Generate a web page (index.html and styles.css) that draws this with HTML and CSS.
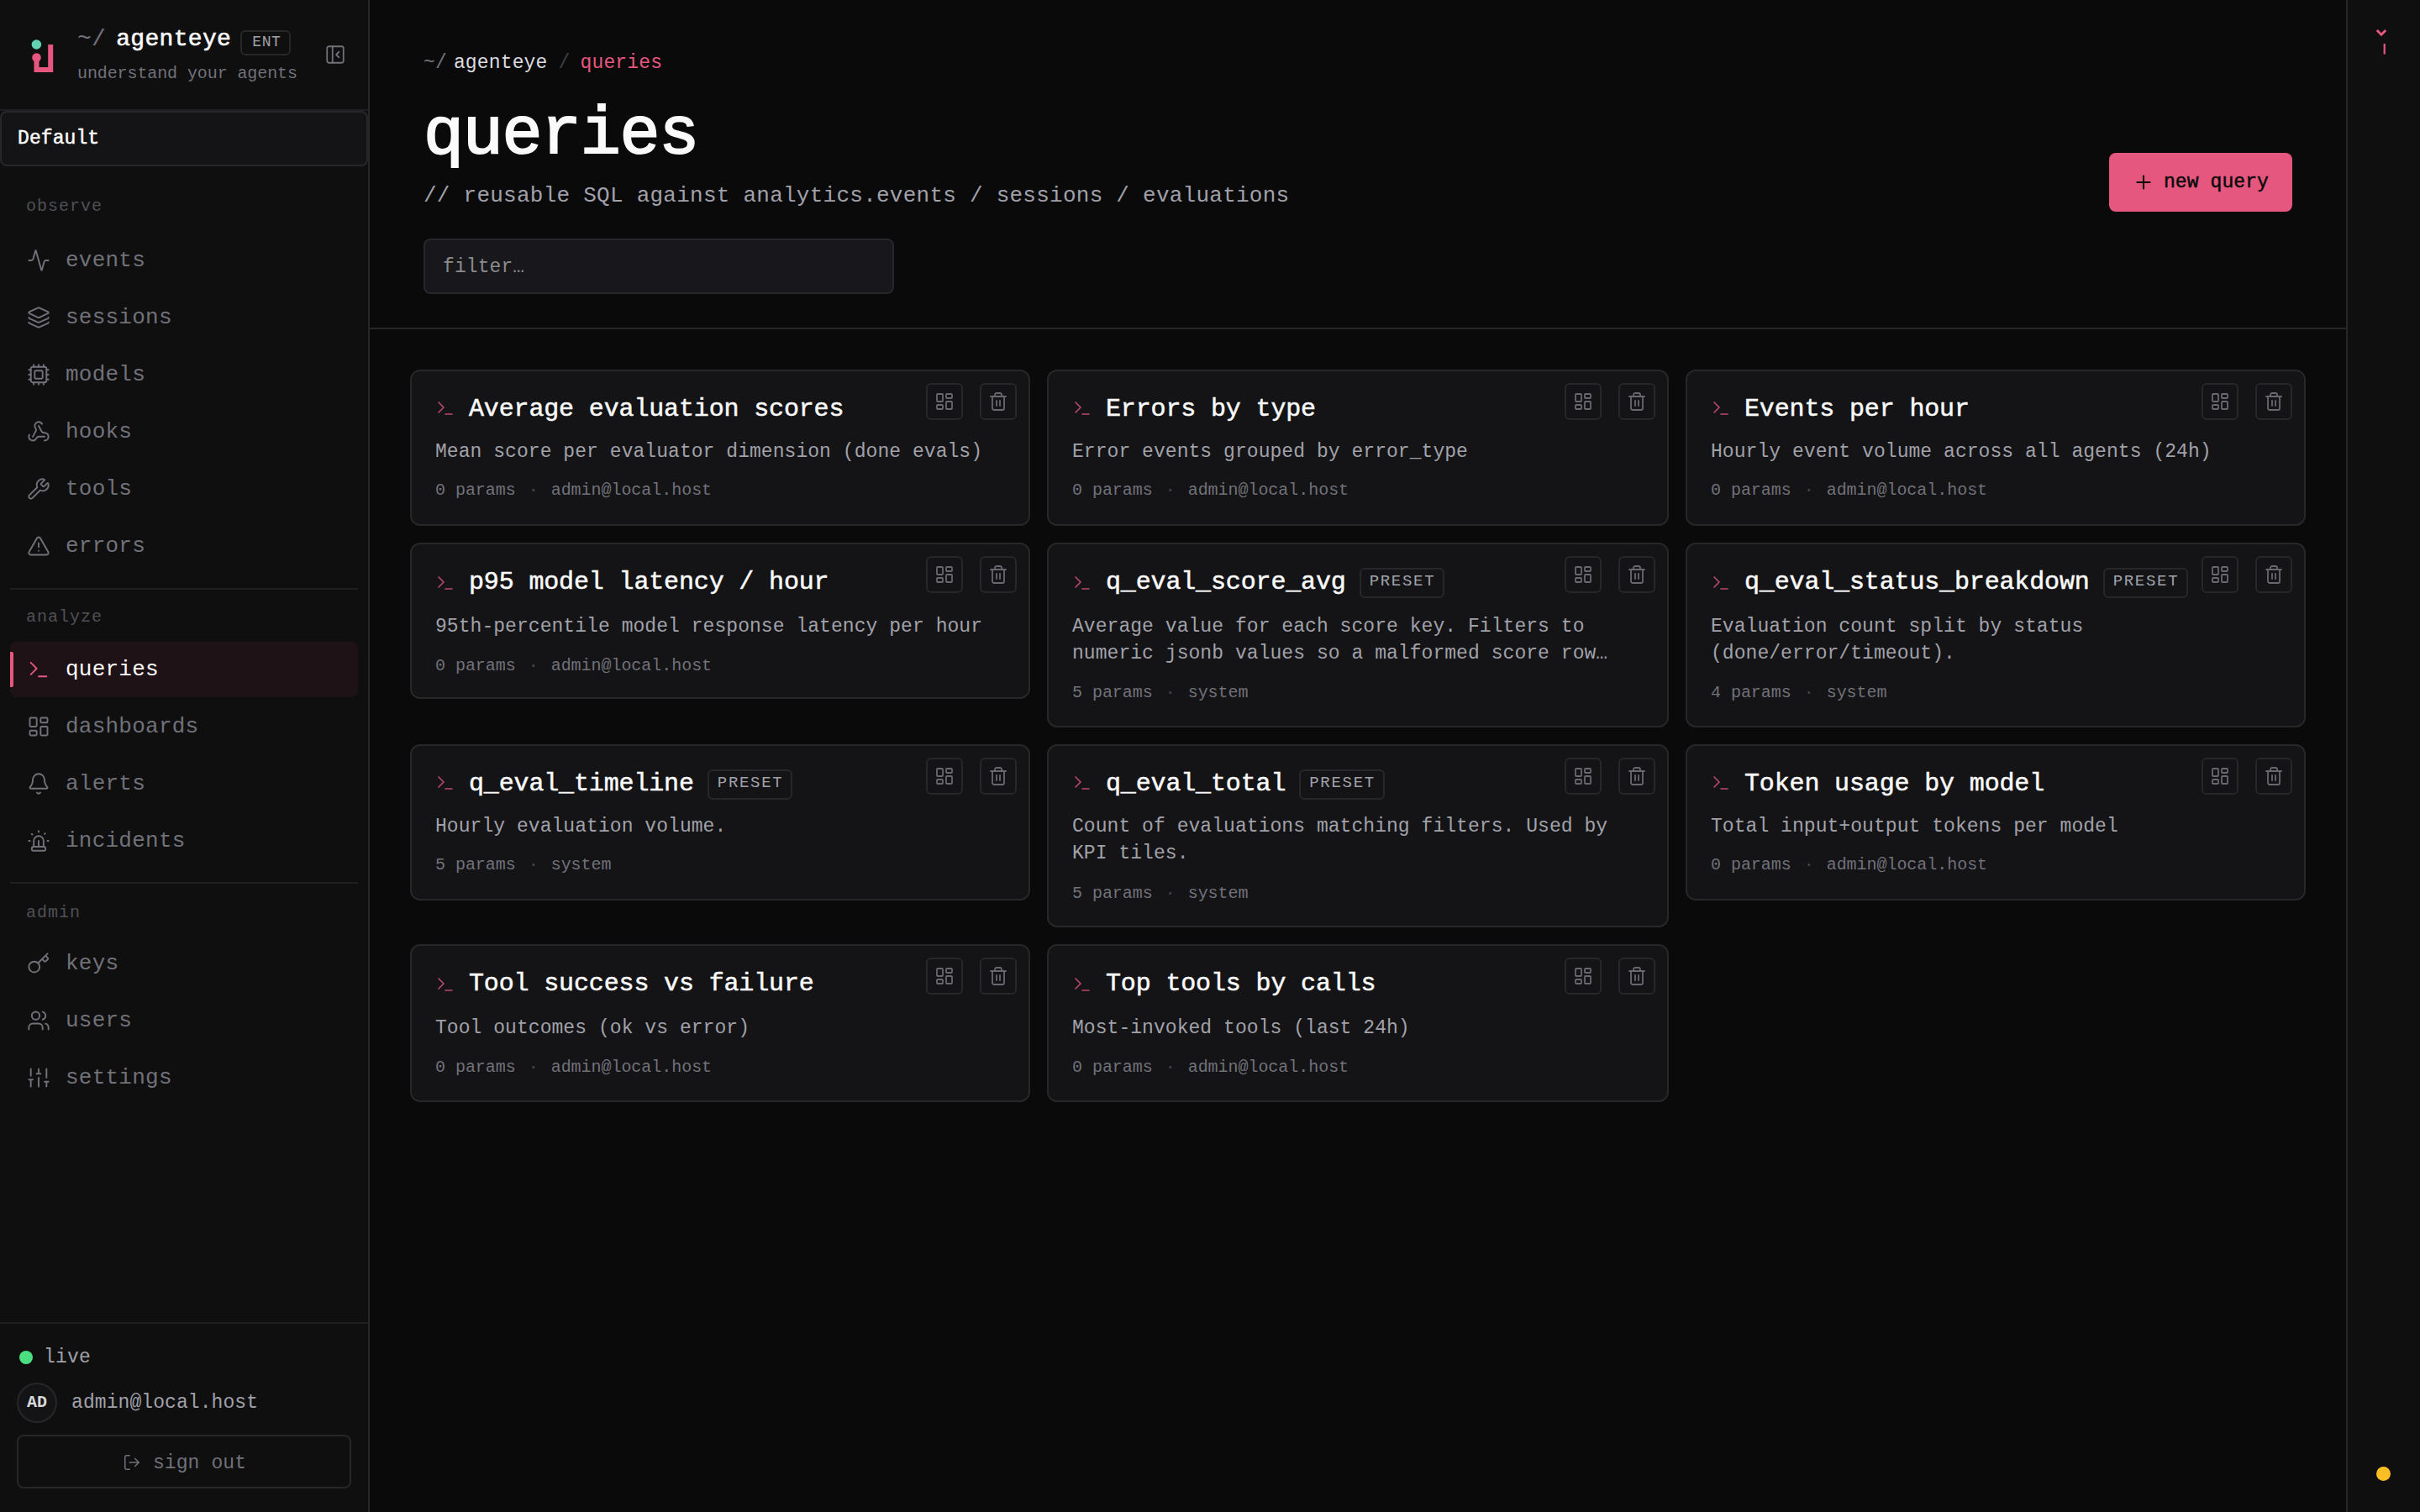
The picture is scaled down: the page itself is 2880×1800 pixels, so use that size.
FILE: index.html
```html
<!DOCTYPE html>
<html lang="en">
<head>
<meta charset="utf-8">
<title>agenteye / queries</title>
<link rel="stylesheet" href="styles.css">
</head>
<body>
<svg class="sprite" aria-hidden="true">
  <symbol id="activity" viewBox="0 0 24 24"><path d="M22 12h-2.48a2 2 0 0 0-1.93 1.46l-2.35 8.36a.25.25 0 0 1-.48 0L9.24 2.18a.25.25 0 0 0-.48 0l-2.35 8.36A2 2 0 0 1 4.49 12H2"/></symbol>
  <symbol id="layers" viewBox="0 0 24 24"><path d="M12.83 2.18a2 2 0 0 0-1.66 0L2.6 6.08a1 1 0 0 0 0 1.83l8.58 3.91a2 2 0 0 0 1.66 0l8.58-3.9a1 1 0 0 0 0-1.83z"/><path d="M2 12a1 1 0 0 0 .58.91l8.6 3.91a2 2 0 0 0 1.65 0l8.58-3.9A1 1 0 0 0 22 12"/><path d="M2 17a1 1 0 0 0 .58.91l8.6 3.91a2 2 0 0 0 1.65 0l8.58-3.9A1 1 0 0 0 22 17"/></symbol>
  <symbol id="cpu" viewBox="0 0 24 24"><path d="M12 20v2M12 2v2M17 20v2M17 2v2M2 12h2M2 17h2M2 7h2M20 12h2M20 17h2M20 7h2M7 20v2M7 2v2"/><rect x="4" y="4" width="16" height="16" rx="2"/><rect x="8" y="8" width="8" height="8" rx="1"/></symbol>
  <symbol id="webhook" viewBox="0 0 24 24"><path d="M18 16.98h-5.99c-1.1 0-1.95.94-2.48 1.9A4 4 0 0 1 2 17c.01-.7.2-1.4.57-2"/><path d="m6 17 3.13-5.78c.53-.97.1-2.18-.5-3.1a4 4 0 1 1 6.89-4.06"/><path d="m12 6 3.13 5.73C15.66 12.7 16.9 13 18 13a4 4 0 0 1 0 8"/></symbol>
  <symbol id="wrench" viewBox="0 0 24 24"><path d="M14.7 6.3a1 1 0 0 0 0 1.4l1.6 1.6a1 1 0 0 0 1.4 0l3.106-3.105c.32-.322.863-.22.983.218a6 6 0 0 1-8.259 7.057l-7.91 7.91a1 1 0 0 1-2.999-3l7.91-7.91a6 6 0 0 1 7.057-8.259c.438.12.54.662.219.984z"/></symbol>
  <symbol id="alert" viewBox="0 0 24 24"><path d="m21.73 18-8-14a2 2 0 0 0-3.48 0l-8 14A2 2 0 0 0 4 21h16a2 2 0 0 0 1.73-3"/><path d="M12 9v4M12 17h.01"/></symbol>
  <symbol id="terminal" viewBox="0 0 24 24"><path d="m4 17 6-6-6-6M12 19h8"/></symbol>
  <symbol id="dashboard" viewBox="0 0 24 24"><rect x="3" y="3" width="7" height="9" rx="1"/><rect x="14" y="3" width="7" height="5" rx="1"/><rect x="14" y="12" width="7" height="9" rx="1"/><rect x="3" y="16" width="7" height="5" rx="1"/></symbol>
  <symbol id="bell" viewBox="0 0 24 24"><path d="M10.268 21a2 2 0 0 0 3.464 0"/><path d="M3.262 15.326A1 1 0 0 0 4 17h16a1 1 0 0 0 .74-1.673C19.41 13.956 18 12.499 18 8A6 6 0 0 0 6 8c0 4.499-1.411 5.956-2.738 7.326"/></symbol>
  <symbol id="siren" viewBox="0 0 24 24"><path d="M7 18v-6a5 5 0 1 1 10 0v6"/><path d="M5 21a1 1 0 0 0 1 1h12a1 1 0 0 0 1-1v-1a2 2 0 0 0-2-2H7a2 2 0 0 0-2 2z"/><path d="M21 12h1M18.5 4.5 18 5M2 12h1M12 2v1M4.929 4.929l.707.707M12 12v6"/></symbol>
  <symbol id="key" viewBox="0 0 24 24"><path d="m15.5 7.5 2.3 2.3a1 1 0 0 0 1.4 0l2.1-2.1a1 1 0 0 0 0-1.4L19 4M21 2l-9.6 9.6"/><circle cx="7.5" cy="15.5" r="5.5"/></symbol>
  <symbol id="users" viewBox="0 0 24 24"><path d="M16 21v-2a4 4 0 0 0-4-4H6a4 4 0 0 0-4 4v2"/><circle cx="9" cy="7" r="4"/><path d="M22 21v-2a4 4 0 0 0-3-3.87M16 3.13a4 4 0 0 1 0 7.75"/></symbol>
  <symbol id="sliders" viewBox="0 0 24 24"><path d="M4 21v-7M4 10V3M12 21v-9M12 8V3M20 21v-5M20 12V3M2 14h4M10 8h4M18 16h4"/></symbol>
  <symbol id="logout" viewBox="0 0 24 24"><path d="M9 21H5a2 2 0 0 1-2-2V5a2 2 0 0 1 2-2h4M16 17l5-5-5-5M21 12H9"/></symbol>
  <symbol id="panel" viewBox="0 0 24 24"><rect x="3" y="3" width="18" height="18" rx="2"/><path d="M9 3v18M16 15l-3-3 3-3"/></symbol>
  <symbol id="plus" viewBox="0 0 24 24"><path d="M5 12h14M12 5v14"/></symbol>
  <symbol id="trash" viewBox="0 0 24 24"><path d="M3 6h18M19 6v14a2 2 0 0 1-2 2H7a2 2 0 0 1-2-2V6M8 6V4a2 2 0 0 1 2-2h4a2 2 0 0 1 2 2v2M10 11v6M14 11v6"/></symbol>
</svg>

<div class="app">
  <aside class="sidebar">
    <header class="brand">
      <svg class="logo" viewBox="0 0 28 36"><path class="logo-line" d="M6.5 14V33H23.2V3"/><circle class="logo-node" cx="6.5" cy="18.6" r="5.3"/><circle class="logo-eye" cx="6.4" cy="3" r="5.8"/></svg>
      <div class="brand-text">
        <div class="brand-row"><span class="tilde">~/</span><span class="brand-name">agenteye</span><span class="ent">ENT</span></div>
        <div class="tagline">understand your agents</div>
      </div>
      <svg class="icon collapse"><use href="#panel"/></svg>
    </header>
    <div class="workspace">Default</div>
    <nav class="nav">
      <section class="group">
        <h2 class="label">observe</h2>
        <a class="item"><svg class="icon"><use href="#activity"/></svg>events</a>
        <a class="item"><svg class="icon"><use href="#layers"/></svg>sessions</a>
        <a class="item"><svg class="icon"><use href="#cpu"/></svg>models</a>
        <a class="item"><svg class="icon"><use href="#webhook"/></svg>hooks</a>
        <a class="item"><svg class="icon"><use href="#wrench"/></svg>tools</a>
        <a class="item"><svg class="icon"><use href="#alert"/></svg>errors</a>
      </section>
      <section class="group">
        <h2 class="label">analyze</h2>
        <a class="item active"><svg class="icon"><use href="#terminal"/></svg>queries</a>
        <a class="item"><svg class="icon"><use href="#dashboard"/></svg>dashboards</a>
        <a class="item"><svg class="icon"><use href="#bell"/></svg>alerts</a>
        <a class="item"><svg class="icon"><use href="#siren"/></svg>incidents</a>
      </section>
      <section class="group">
        <h2 class="label">admin</h2>
        <a class="item"><svg class="icon"><use href="#key"/></svg>keys</a>
        <a class="item"><svg class="icon"><use href="#users"/></svg>users</a>
        <a class="item"><svg class="icon"><use href="#sliders"/></svg>settings</a>
      </section>
    </nav>
    <footer class="account">
      <div class="live"><span class="live-dot"></span>live</div>
      <div class="user"><span class="avatar">AD</span>admin@local.host</div>
      <button class="signout"><svg class="icon"><use href="#logout"/></svg>sign out</button>
    </footer>
  </aside>

  <main class="main">
    <header class="page-head">
      <div class="page-title">
        <div class="crumbs"><span class="tilde">~/</span><span class="crumb-root">agenteye</span><span class="crumb-sep">/</span><span class="crumb-here">queries</span></div>
        <h1>queries</h1>
        <p class="lead">// reusable SQL against analytics.events / sessions / evaluations</p>
        <input class="filter" type="text" placeholder="filter…">
      </div>
      <button class="new-query"><svg class="icon"><use href="#plus"/></svg>new query</button>
    </header>

    <div class="grid">
      <article class="card raised">
        <h3 class="title"><svg class="icon"><use href="#terminal"/></svg>Average evaluation scores</h3>
        <p class="desc">Mean score per evaluator dimension (done evals)</p>
        <p class="meta"><span>0 params</span><span class="dot">·</span><span>admin@local.host</span></p>
        <div class="actions"><button class="act"><svg class="icon"><use href="#dashboard"/></svg></button><button class="act"><svg class="icon"><use href="#trash"/></svg></button></div>
      </article>
      <article class="card raised">
        <h3 class="title"><svg class="icon"><use href="#terminal"/></svg>Errors by type</h3>
        <p class="desc">Error events grouped by error_type</p>
        <p class="meta"><span>0 params</span><span class="dot">·</span><span>admin@local.host</span></p>
        <div class="actions"><button class="act"><svg class="icon"><use href="#dashboard"/></svg></button><button class="act"><svg class="icon"><use href="#trash"/></svg></button></div>
      </article>
      <article class="card raised">
        <h3 class="title"><svg class="icon"><use href="#terminal"/></svg>Events per hour</h3>
        <p class="desc">Hourly event volume across all agents (24h)</p>
        <p class="meta"><span>0 params</span><span class="dot">·</span><span>admin@local.host</span></p>
        <div class="actions"><button class="act"><svg class="icon"><use href="#dashboard"/></svg></button><button class="act"><svg class="icon"><use href="#trash"/></svg></button></div>
      </article>

      <article class="card">
        <h3 class="title"><svg class="icon"><use href="#terminal"/></svg>p95 model latency / hour</h3>
        <p class="desc">95th-percentile model response latency per hour</p>
        <p class="meta"><span>0 params</span><span class="dot">·</span><span>admin@local.host</span></p>
        <div class="actions"><button class="act"><svg class="icon"><use href="#dashboard"/></svg></button><button class="act"><svg class="icon"><use href="#trash"/></svg></button></div>
      </article>
      <article class="card tall">
        <h3 class="title"><svg class="icon"><use href="#terminal"/></svg>q_eval_score_avg<span class="preset">PRESET</span></h3>
        <p class="desc">Average value for each score key. Filters to numeric jsonb values so a malformed score row…</p>
        <p class="meta"><span>5 params</span><span class="dot">·</span><span>system</span></p>
        <div class="actions"><button class="act"><svg class="icon"><use href="#dashboard"/></svg></button><button class="act"><svg class="icon"><use href="#trash"/></svg></button></div>
      </article>
      <article class="card tall">
        <h3 class="title"><svg class="icon"><use href="#terminal"/></svg>q_eval_status_breakdown<span class="preset">PRESET</span></h3>
        <p class="desc">Evaluation count split by status <span class="keep">(done/error/timeout).</span></p>
        <p class="meta"><span>4 params</span><span class="dot">·</span><span>system</span></p>
        <div class="actions"><button class="act"><svg class="icon"><use href="#dashboard"/></svg></button><button class="act"><svg class="icon"><use href="#trash"/></svg></button></div>
      </article>

      <article class="card raised">
        <h3 class="title"><svg class="icon"><use href="#terminal"/></svg>q_eval_timeline<span class="preset">PRESET</span></h3>
        <p class="desc">Hourly evaluation volume.</p>
        <p class="meta"><span>5 params</span><span class="dot">·</span><span>system</span></p>
        <div class="actions"><button class="act"><svg class="icon"><use href="#dashboard"/></svg></button><button class="act"><svg class="icon"><use href="#trash"/></svg></button></div>
      </article>
      <article class="card raised two-line">
        <h3 class="title"><svg class="icon"><use href="#terminal"/></svg>q_eval_total<span class="preset">PRESET</span></h3>
        <p class="desc">Count of evaluations matching filters. Used by KPI tiles.</p>
        <p class="meta"><span>5 params</span><span class="dot">·</span><span>system</span></p>
        <div class="actions"><button class="act"><svg class="icon"><use href="#dashboard"/></svg></button><button class="act"><svg class="icon"><use href="#trash"/></svg></button></div>
      </article>
      <article class="card raised">
        <h3 class="title"><svg class="icon"><use href="#terminal"/></svg>Token usage by model</h3>
        <p class="desc">Total input+output tokens per model</p>
        <p class="meta"><span>0 params</span><span class="dot">·</span><span>admin@local.host</span></p>
        <div class="actions"><button class="act"><svg class="icon"><use href="#dashboard"/></svg></button><button class="act"><svg class="icon"><use href="#trash"/></svg></button></div>
      </article>

      <article class="card last">
        <h3 class="title"><svg class="icon"><use href="#terminal"/></svg>Tool success vs failure</h3>
        <p class="desc">Tool outcomes (ok vs error)</p>
        <p class="meta"><span>0 params</span><span class="dot">·</span><span>admin@local.host</span></p>
        <div class="actions"><button class="act"><svg class="icon"><use href="#dashboard"/></svg></button><button class="act"><svg class="icon"><use href="#trash"/></svg></button></div>
      </article>
      <article class="card last">
        <h3 class="title"><svg class="icon"><use href="#terminal"/></svg>Top tools by calls</h3>
        <p class="desc">Most-invoked tools (last 24h)</p>
        <p class="meta"><span>0 params</span><span class="dot">·</span><span>admin@local.host</span></p>
        <div class="actions"><button class="act"><svg class="icon"><use href="#dashboard"/></svg></button><button class="act"><svg class="icon"><use href="#trash"/></svg></button></div>
      </article>
    </div>
  </main>

  <aside class="rail">
    <svg class="prompt" viewBox="0 0 18 32"><path d="M.8 3 6 8.2 11.2 3"/><path class="cursor" d="M9.7 19v12.6"/></svg>
    <span class="status"></span>
  </aside>
</div>
</body>
</html>
```
FILE: styles.css
```css
:root {
  --bg: #0a0a0a;
  --side: #0f0f0f;
  --card: #141416;
  --line: #27272a;
  --line-soft: #1f1f21;
  --text: #fafafa;
  --muted: #a1a1aa;
  --dim: #71717a;
  --pink: #e6577f;
}

* { box-sizing: border-box; margin: 0; padding: 0; }

body {
  background: var(--bg);
  color: var(--text);
  font-family: "Liberation Mono", "Courier New", monospace;
  font-size: 23px;
  letter-spacing: .08px;
}

button, input { font: inherit; letter-spacing: inherit; color: inherit; background: none; border: 0; }
h1, h2, h3 { font-weight: 400; }

.sprite { display: none; }
.icon {
  flex: none;
  width: 28px;
  height: 28px;
  fill: none;
  stroke: currentColor;
  stroke-width: 1.65;
  stroke-linecap: round;
  stroke-linejoin: round;
}

.app { display: flex; width: 2880px; height: 1800px; }

/* Sidebar */
.sidebar {
  display: flex;
  flex-direction: column;
  width: 440px;
  background: var(--side);
  border-right: 2px solid var(--line);
}

.brand {
  display: flex;
  height: 132px;
  padding: 27px 24px 0 37px;
  border-bottom: 2px solid var(--line-soft);
}
.logo { width: 28px; height: 36px; margin: 23px 27px 0 0; overflow: visible; }
.logo-line { fill: none; stroke: var(--pink); stroke-width: 6; }
.logo-node { fill: var(--pink); }
.logo-eye { fill: #62d0b3; }
.brand-row { display: flex; align-items: center; height: 38px; font-size: 28px; letter-spacing: .32px; }
.tilde { color: var(--dim); }
.brand-name { margin: 0 11px 0 12px; -webkit-text-stroke: .6px; }
.ent {
  height: 30px;
  padding: 0 10px 0 12px;
  margin-top: 9px;
  border: 2px solid var(--line);
  border-radius: 6px;
  color: var(--muted);
  font-size: 18px;
  letter-spacing: .6px;
  line-height: 25px;
}
.tagline { margin-top: 9px; color: var(--dim); font-size: 20px; letter-spacing: -.1px; line-height: 28px; }
.collapse { width: 26px; height: 26px; margin: 25px 0 0 32px; color: var(--dim); }

.workspace {
  height: 66px;
  padding-left: 19px;
  border: 2px solid var(--line);
  border-radius: 8px;
  background: var(--card);
  line-height: 62px;
  -webkit-text-stroke: .5px;
}

.nav { padding: 0 12px; }
.group { display: flex; flex-direction: column; gap: 2px; padding: 30px 0 17px; }
.group + .group { border-top: 2px solid var(--line-soft); padding: 16px 0; }
.label { height: 44px; padding-left: 19px; color: #505056; font-size: 20px; letter-spacing: 1px; line-height: 34px; }
.group:first-child .label { height: 47px; line-height: 36px; }
.group:last-child .label { line-height: 37px; }
.item {
  display: flex;
  align-items: center;
  gap: 18px;
  height: 66px;
  padding-left: 20px;
  border-radius: 8px;
  color: var(--dim);
  font-size: 26px;
  letter-spacing: .24px;
}
.active {
  position: relative;
  background: #1e1216;
  color: var(--text);
}
.active .icon { color: var(--pink); }
.active::before {
  content: "";
  position: absolute;
  left: 0;
  top: 12px;
  width: 4px;
  height: 42px;
  border-radius: 0 2px 2px 0;
  background: var(--pink);
}

.account {
  height: 226px;
  margin-top: auto;
  padding: 24px 18px 28px 20px;
  border-top: 2px solid var(--line-soft);
  color: var(--muted);
}
.live { display: flex; align-items: center; gap: 13px; height: 32px; padding-left: 3px; letter-spacing: .2px; }
.live-dot { width: 16px; height: 16px; border-radius: 50%; background: #4ade80; }
.user { display: flex; align-items: center; gap: 17px; height: 48px; margin-top: 14px; line-height: 28px; }
.avatar {
  width: 48px;
  height: 48px;
  border: 2px solid var(--line);
  border-radius: 50%;
  background: var(--card);
  color: #d9d9dc;
  font-size: 20px;
  font-weight: 700;
  letter-spacing: 0;
  line-height: 43px;
  text-align: center;
}
.signout {
  display: flex;
  align-items: center;
  justify-content: center;
  gap: 14px;
  width: 398px;
  height: 64px;
  margin-top: 14px;
  padding: 3px 0 0 1px;
  border: 2px solid var(--line);
  border-radius: 8px;
  color: var(--dim);
}
.signout .icon { width: 22px; height: 22px; margin-bottom: 2px; }

/* Main column */
.main { width: 2352px; }

.page-head {
  display: flex;
  justify-content: space-between;
  height: 392px;
  padding: 58px 64px 0;
  border-bottom: 2px solid var(--line);
}
.crumbs { display: flex; height: 34px; line-height: 35px; letter-spacing: .15px; }
.crumb-root { margin-left: 8px; color: #dcdce0; }
.crumb-sep { margin: 0 12px 0 13px; color: #3f3f46; }
.crumb-here { color: var(--pink); }
h1 { height: 88px; margin-top: 25px; font-size: 80px; letter-spacing: -1.3px; line-height: 88px; -webkit-text-stroke: 2px; }
.lead { height: 36px; margin-top: 10px; color: var(--muted); font-size: 26px; letter-spacing: .25px; line-height: 36px; }
.filter {
  display: block;
  width: 560px;
  height: 66px;
  margin-top: 33px;
  padding: 1px 20px 0 21px;
  border: 2px solid var(--line);
  border-radius: 8px;
  background: #18181c;
}
.filter::placeholder { color: #8b8b8b; opacity: 1; }

.new-query {
  display: flex;
  align-items: center;
  gap: 11px;
  height: 70px;
  margin-top: 124px;
  padding: 0 28px;
  border-radius: 8px;
  background: var(--pink);
  color: #0a0a0a;
  letter-spacing: .1px;
  -webkit-text-stroke: .5px;
}
.new-query .icon { width: 26px; height: 26px; stroke-width: 1.9; }

.grid {
  display: grid;
  grid-template-columns: 738px 740px 738px;
  align-items: start;
  gap: 20px;
  padding: 48px;
}
.card {
  position: relative;
  min-height: 186px;
  padding: 25px 28px 23px;
  border: 2px solid var(--line);
  border-radius: 12px;
  background: var(--card);
}
.tall, .raised, .last { padding-bottom: 25px; }
.title { display: flex; align-items: center; gap: 16px; height: 40px; font-size: 30px; letter-spacing: -.15px; -webkit-text-stroke: .5px; }
.title .icon { width: 24px; height: 24px; margin-top: 2px; color: #bb4a6a; }
.raised .title .icon { margin: 0 0 2px; }
.preset {
  height: 36px;
  padding: 0 9px 0 10px;
  margin-top: 2px;
  border: 2px solid var(--line);
  border-radius: 6px;
  color: var(--muted);
  font-size: 19px;
  letter-spacing: 1.7px;
  line-height: 29px;
  -webkit-text-stroke: 0;
}
.desc { margin-top: 17px; color: var(--muted); line-height: 32px; letter-spacing: .05px; }
.raised .desc { margin-top: 15px; }
.keep { display: inline-block; }
.meta { display: flex; gap: 15px; margin-top: 17px; color: var(--dim); font-size: 20px; letter-spacing: -.04px; line-height: 28px; }
.raised .meta { margin-top: 16px; padding-bottom: 1px; }
.two-line .meta { margin-top: 18px; padding-bottom: 0; }
.two-line { padding-bottom: 24px; }
.dot { color: #45454b; }

.actions { position: absolute; top: 14px; right: 14px; display: flex; gap: 20px; }
.act {
  display: flex;
  align-items: center;
  justify-content: center;
  width: 44px;
  height: 44px;
  border: 2px solid var(--line);
  border-radius: 6px;
  color: #68686f;
}
.act .icon { width: 24px; height: 24px; stroke-width: 1.8; }

/* Right rail */
.rail {
  display: flex;
  flex-direction: column;
  align-items: center;
  justify-content: space-between;
  width: 88px;
  padding: 33px 1px 37px 0;
  border-left: 2px solid var(--line);
  background: var(--side);
}
.prompt { width: 18px; height: 32px; fill: none; stroke: var(--pink); stroke-width: 3; }
.cursor { stroke-width: 2.2; }
.status { width: 17px; height: 17px; border-radius: 50%; background: #fbbf24; }
```
